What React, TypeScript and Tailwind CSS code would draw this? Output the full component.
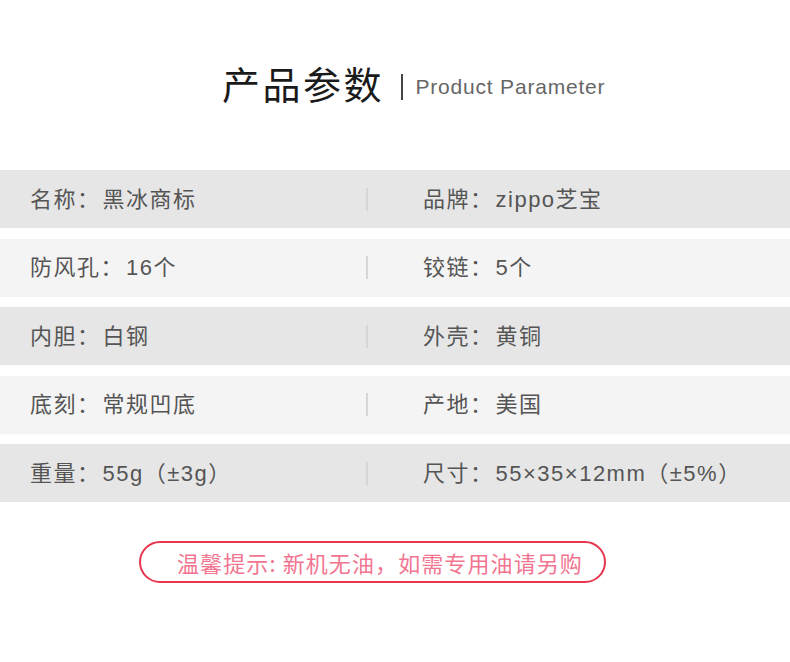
import React from "react";

const rows: [string, string, string, string][] = [
  ["名称：", "黑冰商标", "品牌：", "zippo芝宝"],
  ["防风孔：", "16个", "铰链：", "5个"],
  ["内胆：", "白钢", "外壳：", "黄铜"],
  ["底刻：", "常规凹底", "产地：", "美国"],
  ["重量：", "55g（±3g）", "尺寸：", "55×35×12mm（±5%）"],
];

const font = { fontFamily: '"Liberation Sans", "Noto Sans CJK SC", sans-serif' };

export default function App() {
  return (
    <div className="w-[790px] h-[662px] bg-white flex flex-col" style={font}>
      <div className="h-[170px] flex items-start pl-[222px] pt-[61px]">
        <div className="flex items-center">
          <span
            className="text-[38px] leading-[44px] text-[#1a1a1a] tracking-[2.5px]"
            style={{ fontFamily: '"Noto Sans CJK SC", sans-serif' }}
          >
            产品参数
          </span>
          <span className="ml-[17px] w-[1.5px] h-[26px] bg-[#444] mt-[8px]" />
          <span className="ml-[13px] text-[21px] tracking-[0.8px] text-[#666] mt-[8px]">
            Product Parameter
          </span>
        </div>
      </div>
      <div className="flex flex-col gap-[10.5px]">
        {rows.map((r, i) => (
          <div
            key={i}
            className={`flex items-center h-[58px] ${i % 2 === 0 ? "bg-[#e6e6e6]" : "bg-[#f4f4f4]"}`}
          >
            <div className="w-[366px] pl-[30px] text-[22px] tracking-[1.5px] text-[#555] whitespace-nowrap">
              <span className="mr-[2px]">{r[0]}</span>
              {r[1]}
            </div>
            <div className="w-[2px] h-[23px] bg-[#d6d6d6]" />
            <div className="pl-[55px] text-[22px] tracking-[1.5px] text-[#555] whitespace-nowrap">
              <span className="mr-[2px]">{r[2]}</span>
              {r[3]}
            </div>
          </div>
        ))}
      </div>
      <div className="pl-[139px] mt-[39px]">
        <div className="w-[467px] h-[42px] rounded-full border-2 border-[#e8354f] flex items-center pl-[36px]">
          <span
            className="text-[22px] tracking-[1.1px] text-[#f27590] whitespace-nowrap"
            style={{ fontFamily: '"Noto Sans CJK SC", sans-serif' }}
          >
            温馨提示: 新机无油，如需专用油请另购
          </span>
        </div>
      </div>
    </div>
  );
}
